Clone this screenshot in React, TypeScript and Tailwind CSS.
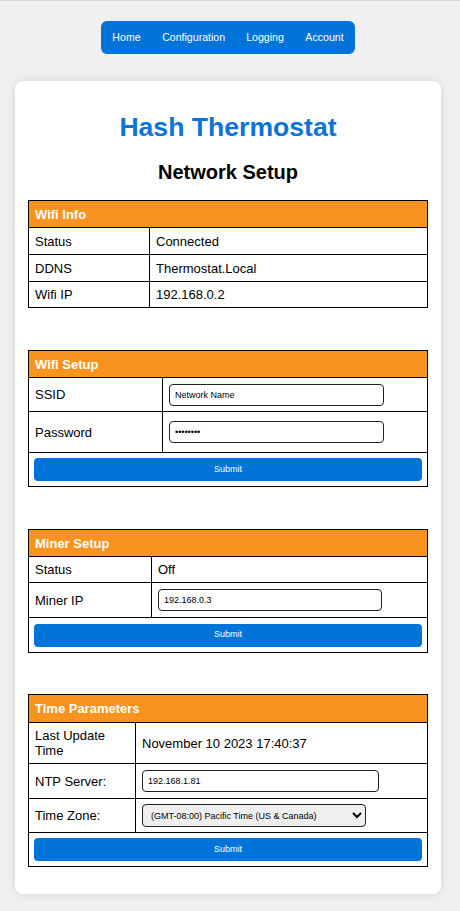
const cell = "border border-black px-[6px] text-[13px] leading-[15px] text-black align-middle";
const head = "border border-black bg-[#f7931e] px-[6px] text-[13px] leading-[15px] font-bold text-white align-middle";
const input = "h-[22px] rounded-[4px] border border-[#222] bg-white px-[5px] text-[9px] text-black outline-none";

const SubmitRow = ({ h = "h-[34px]" }: { h?: string }) => {
    return (
        <tr className={h}>
            <td colSpan={2} className="border border-black px-[5px]">
                <button
                    type="button"
                    className="block h-[23px] w-full rounded-[4px] bg-[#0074d9] text-[9px] text-white"
                >
                    Submit
                </button>
            </td>
        </tr>
    );
};

const App = () => {
    return (
        <div className="min-h-[911px] border-t border-[#d9d9d9] bg-[#f0f0f0] font-['Liberation_Sans',Arial,sans-serif]">
            <div className="w-[456px]">
                <nav className="mx-auto mt-[20px] flex h-[33px] w-fit items-center rounded-[6px] bg-[#0074d9]">
                    <a className="px-[11px] text-[10.6px] text-white" href="#">
                        Home
                    </a>
                    <a className="px-[10.5px] text-[10.6px] text-white" href="#">
                        Configuration
                    </a>
                    <a className="px-[10.5px] text-[10.6px] text-white" href="#">
                        Logging
                    </a>
                    <a className="px-[11px] text-[10.6px] text-white" href="#">
                        Account
                    </a>
                </nav>

                <div className="mx-[15px] mt-[27px] rounded-[8px] bg-white px-[13px] pt-[31px] pb-[27px] shadow-[0_0_10px_rgba(0,0,0,0.12)]">
                    <h1 className="text-center text-[26.6px] leading-[30px] font-bold text-[#0b74d6]">
                        Hash Thermostat
                    </h1>
                    <h2 className="mt-[18px] text-center text-[20px] leading-[24px] font-bold text-black">
                        Network Setup
                    </h2>

                    {/* wifi info */}
                    <table className="mt-[16px] w-full table-fixed border-collapse">
                        <colgroup>
                            <col className="w-[121px]" />
                            <col />
                        </colgroup>
                        <tbody>
                            <tr className="h-[27px]">
                                <td colSpan={2} className={head}>
                                    Wifi Info
                                </td>
                            </tr>
                            <tr className="h-[27px]">
                                <td className={cell}>Status</td>
                                <td className={cell}>Connected</td>
                            </tr>
                            <tr className="h-[27px]">
                                <td className={cell}>DDNS</td>
                                <td className={cell}>Thermostat.Local</td>
                            </tr>
                            <tr className="h-[26px]">
                                <td className={cell}>Wifi IP</td>
                                <td className={cell}>192.168.0.2</td>
                            </tr>
                        </tbody>
                    </table>

                    {/* wifi setup */}
                    <table className="mt-[42px] w-full table-fixed border-collapse">
                        <colgroup>
                            <col className="w-[134px]" />
                            <col />
                        </colgroup>
                        <tbody>
                            <tr className="h-[27px]">
                                <td colSpan={2} className={head}>
                                    Wifi Setup
                                </td>
                            </tr>
                            <tr className="h-[34px]">
                                <td className={cell}>SSID</td>
                                <td className={cell}>
                                    <input className={`${input} w-[215px]`} defaultValue="Network Name" />
                                </td>
                            </tr>
                            <tr className="h-[41px]">
                                <td className={cell}>Password</td>
                                <td className={cell}>
                                    <input
                                        type="password"
                                        className={`${input} w-[215px]`}
                                        defaultValue="password"
                                    />
                                </td>
                            </tr>
                            <SubmitRow />
                        </tbody>
                    </table>

                    {/* miner setup */}
                    <table className="mt-[42px] w-full table-fixed border-collapse">
                        <colgroup>
                            <col className="w-[123px]" />
                            <col />
                        </colgroup>
                        <tbody>
                            <tr className="h-[27px]">
                                <td colSpan={2} className={head}>
                                    Miner Setup
                                </td>
                            </tr>
                            <tr className="h-[26px]">
                                <td className={cell}>Status</td>
                                <td className={cell}>Off</td>
                            </tr>
                            <tr className="h-[35px]">
                                <td className={cell}>Miner IP</td>
                                <td className={cell}>
                                    <input className={`${input} w-[224px]`} defaultValue="192.168.0.3" />
                                </td>
                            </tr>
                            <SubmitRow h="h-[35px]" />
                        </tbody>
                    </table>

                    {/* time */}
                    <table className="mt-[41px] w-full table-fixed border-collapse">
                        <colgroup>
                            <col className="w-[107px]" />
                            <col />
                        </colgroup>
                        <tbody>
                            <tr className="h-[28px]">
                                <td colSpan={2} className={head}>
                                    Time Parameters
                                </td>
                            </tr>
                            <tr className="h-[41px]">
                                <td className={cell}>Last Update Time</td>
                                <td className={cell}>November 10 2023 17:40:37</td>
                            </tr>
                            <tr className="h-[35px]">
                                <td className={cell}>NTP Server:</td>
                                <td className={cell}>
                                    <input className={`${input} w-[237px]`} defaultValue="192.168.1.81" />
                                </td>
                            </tr>
                            <tr className="h-[34px]">
                                <td className={cell}>Time Zone:</td>
                                <td className={cell}>
                                    <select
                                        className="h-[23px] w-[224px] rounded-[4px] border border-[#222] bg-[#efefef] pl-[4px] text-[9px] text-black"
                                        defaultValue="-8"
                                    >
                                        <option value="-8">(GMT-08:00) Pacific Time (US &amp; Canada)</option>
                                    </select>
                                </td>
                            </tr>
                            <SubmitRow />
                        </tbody>
                    </table>
                </div>
            </div>
        </div>
    );
};

export default App;
